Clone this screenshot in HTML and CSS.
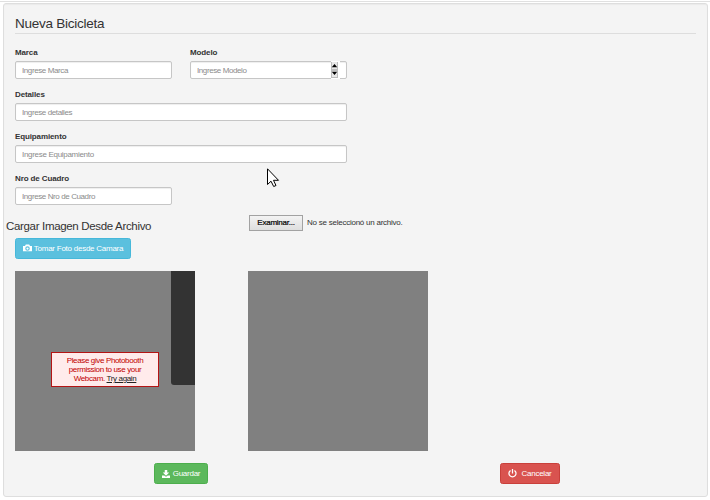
FILE: index.html
```html
<!DOCTYPE html>
<html lang="es">
<head>
<meta charset="utf-8">
<title>Nueva Bicicleta</title>
<link rel="stylesheet" href="styles.css">
</head>
<body>
<main class="panel">
  <h1 class="title">Nueva Bicicleta</h1>
  <form class="fields">
    <div class="field"><label>Marca</label><div class="input">Ingrese Marca</div></div>
    <div class="field"><label>Modelo</label><div class="input">Ingrese Modelo
      <svg class="spinner" width="9" height="18" viewBox="0 0 9 18"><path fill="#fff" d="M0 0h9v18H0z"/><path fill="#bdbdbd" d="M0 1h7v16H0z"/><path fill="#e8e8e8" d="M1 1h5v7H1zM1 10h5v6H1z"/><path d="M.8 6.200h5.400L3.500 3zM.8 10.800h5.400L3.500 14z"/></svg></div></div>
    <div class="field wide"><label>Detalles</label><div class="input">Ingrese detalles</div></div>
    <div class="field wide"><label>Equipamiento</label><div class="input long">Ingrese Equipamiento</div></div>
    <div class="field"><label>Nro de Cuadro</label><div class="input">Ingrese Nro de Cuadro</div></div>
  </form>
  <div class="upload">
    <h2>Cargar Imagen Desde Archivo</h2>
    <div class="file"><button class="browse" type="button">Examinar...</button><span class="filename">No se seleccionó un archivo.</span></div>
  </div>
  <button class="btn info" type="button">
    <svg width="9" height="9" viewBox="0 0 16 16"><path fill="#fff" fill-rule="evenodd" d="M5 1h6l1.500 2.500H16V13H0V3.500h3.500zM8 4a4 4 0 1 0 0 8 4 4 0 0 0 0-8zm0 2a2 2 0 1 1 0 4 2 2 0 0 1 0-4z"/></svg>
    <span>Tomar Foto desde Camara</span></button>
  <div class="previews">
    <div class="preview">
      <div class="drawer"></div>
      <p class="warning">Please give Photobooth<br>permission to use your<br>Webcam. <a>Try again</a></p>
    </div>
    <div class="preview"></div>
  </div>
  <div class="actions">
    <button class="btn success" type="button"><svg width="8" height="8" viewBox="0 0 16 16"><path fill="#fff" d="M5.500 0h5v5H14.500L8 11.500 1.500 5h4zM0 11h4.500L8 13.500 11.500 11H16v5H0z"/></svg><span>Guardar</span></button>
    <button class="btn danger" type="button"><svg width="9" height="9" viewBox="0 0 16 16"><path fill="none" stroke="#fff" stroke-width="2.200" d="M4.500 2.500a6.300 6.300 0 1 0 7 0M8 0v8"/></svg><span>Cancelar</span></button>
  </div>
</main>
<svg class="cursor" width="13" height="20" viewBox="0 0 13 20"><path fill="#fff" stroke="#000" d="M.5.8v15.700l3.500-3.300 2.700 5.300 2.300-1-2.500-5.200h5z"/></svg>
</body>
</html>
```
FILE: styles.css
```css
* { box-sizing: border-box; }
body {
  margin: 0;
  padding: 1px 2px 0 3px;
  height: 500px;
  overflow: hidden;
  background: #fff;
  color: #333;
  font: 8px/10px "Liberation Sans", Arial, sans-serif;
  letter-spacing: -.24px;
}
body::before { content: ""; display: block; height: 1px; margin: 0 -2px 1px -3px; background: #e0e0e0; }
.panel {
  display: flow-root;
  height: 494px;
  padding: 0 11px;
  border: 1px solid #dedede;
  border-radius: 3px;
  background: #f4f4f4;
  box-shadow: inset 0 1px 1px rgba(0, 0, 0, .04);
}
h1, h2, p { margin: 0; font-weight: normal; white-space: nowrap; }
span { white-space: nowrap; }
.title { height: 30px; padding-top: 12px; border-bottom: 1px solid #ddd; font-size: 13.5px; line-height: 16px; letter-spacing: -.25px; }
.fields { display: grid; grid-template-columns: 157px 157px; column-gap: 18px; padding-top: 11px; }
.field { height: 42px; }
.wide { grid-column: span 2; }
label { display: block; height: 16px; line-height: 15px; font-weight: bold; letter-spacing: -.12px; }
.input {
  position: relative;
  height: 18px;
  padding: 0 6px;
  border: 1px solid #c6c6c6;
  border-radius: 2px;
  background: #fff;
  box-shadow: inset 0 1px 1px rgba(0, 0, 0, .07);
  color: #8b8b8b;
  line-height: 17px;
  letter-spacing: -.4px;
  white-space: nowrap;
}
.long { letter-spacing: -.3px; }
.spinner { position: absolute; right: 6px; top: -1px; }
.upload { display: flex; height: 25px; margin-left: -9px; }
.upload h2 { width: 243px; padding-top: 6px; font-size: 11.5px; line-height: 14px; letter-spacing: -.33px; }
.file { display: flex; height: 16px; margin-top: 2px; align-items: center; }
.browse { width: 54px; height: 16px; padding: 0; border: 1px solid #a2a2a2; background: linear-gradient(#f3f3f3, #dedede); color: #000; font: inherit; line-height: 12px; letter-spacing: -.25px; -webkit-text-stroke: .2px; }
.filename { margin-left: 4px; }
.btn {
  display: flex;
  align-items: center;
  justify-content: center;
  gap: 2px;
  height: 21px;
  padding: 0;
  border: 1px solid;
  border-radius: 2.5px;
  color: #fff;
  font: inherit;
  line-height: 20px;
  letter-spacing: -.25px;
}
.info { width: 116px; background: #5bc0de; border-color: #46b8da; }
.previews { display: flex; gap: 53px; margin-top: 12px; }
.preview { position: relative; width: 180px; height: 180px; background: #808080; }
.drawer { position: absolute; right: 0; top: 0; width: 24px; height: 114px; border-radius: 0 0 0 3px; background: #333; }
.warning { position: absolute; left: 36px; top: 81px; width: 108px; height: 35px; padding-top: 3px; border: 1px solid #b41414; background: #ffebeb; color: #c00000; line-height: 9px; letter-spacing: -.36px; text-align: center; }
.warning a { color: #222; text-decoration: underline; }
.actions { display: flex; gap: 292px; margin: 12px 0 0 139px; }
.success { width: 54px; gap: 3px; background: #5cb85c; border-color: #4cae4c; }
.danger { width: 60px; gap: 4px; background: #d9534f; border-color: #c9403b; }
.cursor { position: absolute; left: 267px; top: 168px; }
```
